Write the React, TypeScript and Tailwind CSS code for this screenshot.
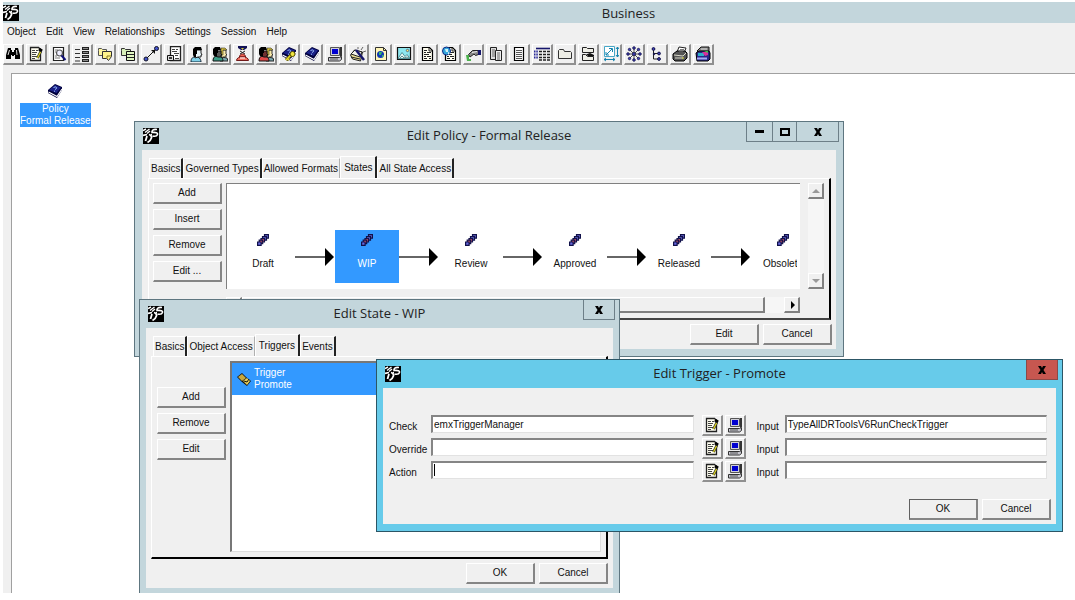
import React from "react";

type Children = { children?: React.ReactNode };

/* ---------- icons ---------- */

function Svg({ children, className = "w-4 h-4" }: Children & { className?: string }) {
  return (
    <svg viewBox="0 0 16 16" className={`${className} block shrink-0`} fill="none" aria-hidden="true">
      {children}
    </svg>
  );
}

const Logo = () => (
  <Svg>
    <path d="M0 0h16v16H0z" fill="#000" />
    <path d="M0 2.500 3 1M2 4.500 6.500 1M4 5.500 7 3" stroke="#fff" strokeWidth="1.400" />
    <path d="M14 1.500C10 1 8.500 2.500 9 4.500 13 4 15 5 14.500 6.500 14 8 12 8.500 9.500 8" stroke="#fff" strokeWidth="1.600" />
    <path d="M0 7.500 4 6.500M4 8 2.500 13M6 6.500C10 7.500 9 12 4.500 14.500" stroke="#fff" strokeWidth="1.800" />
    <path d="M9 6 7 8" stroke="#fff" />
  </Svg>
);

const Binoculars = () => (
  <Svg>
    <path d="M3 2h3v2h1v2h2V4h1V2h3l2 7v4h-5V9H9v1H7V9H6v4H1V9z" fill="#000" />
    <path d="M4.500 4 3 9M11.500 4 12 9" stroke="#ddd" />
  </Svg>
);

const NoteEdit = () => (
  <Svg>
    <path d="M2.500 1.500h8l2 2v11h-10z" fill="#fffef0" stroke="#222" strokeWidth="1.300" />
    <path d="M4 4.500h3M8 4.500h2M4 6.500h5M4 8.500h4M4 10.500h5M4 12.500h3" stroke="#444" strokeWidth="1.100" />
    <path d="m11 3 3 2" stroke="#000" strokeWidth="3" />
    <path d="M13 5 9.500 12" stroke="#222" strokeWidth="2.600" />
    <path d="m12.500 6-3 6" stroke="#d8d020" strokeWidth="1.400" />
  </Svg>
);

const NoteFind = () => (
  <Svg>
    <path d="M2.500 1.500h10v13h-10z" fill="#fff" stroke="#222" strokeWidth="1.200" />
    <path d="M4 4h3M4 6h1M4 12h5M4 10h2" stroke="#777" />
    <circle cx="8.500" cy="7" r="3" fill="#eef" stroke="#555" strokeWidth="1.200" />
    <path d="m10.500 9.500 4 4.500" stroke="#11117a" strokeWidth="2" />
  </Svg>
);

const ListBlocks = () => (
  <Svg>
    <path d="M1 3.500h5M1 7.500h5M1 11.500h5M1 15h5" stroke="#333" />
    <path d="M8 1h7v3H8zM8 5h7v3H8zM8 9h7v3H8zM8 13h7v3H8z" fill="#222" />
    <path d="M9 2.500h5M9 6.500h5M9 10.500h5M9 14.500h5" stroke="#888" />
  </Svg>
);

const YellowNotes = () => (
  <Svg>
    <path d="M1.500 4.500v-2h3l1 1h4v6h-8z" fill="#fff7a0" stroke="#555" />
    <path d="M5.500 5.500h9v5l-3 4-2-2h-4z" fill="#fff48a" stroke="#333" />
    <path d="M10 13v-3h4" stroke="#8a7a20" />
  </Svg>
);

const GreenNotes = () => (
  <Svg>
    <path d="M1.500 4.500v-2h3l1 1h5v6h-9z" fill="#d8f0b8" stroke="#333" />
    <path d="M6.500 5.500h8v9h-8z" fill="#dff6c0" stroke="#111" />
    <path d="M7 8.500h7M7 11.500h7" stroke="#222" />
  </Svg>
);

const Link = () => (
  <Svg>
    <path d="m3 13 9-9" stroke="#111" />
    <path d="M8 4h4v4z" fill="#111" />
    <circle cx="3" cy="13" r="2" fill="#4455cc" stroke="#112" />
    <circle cx="13.500" cy="2.500" r="2" fill="#4455cc" stroke="#112" />
  </Svg>
);

const Report = () => (
  <Svg>
    <path d="M4.500.5h10v14h-10z" fill="#fff" stroke="#222" strokeWidth="1.300" />
    <path d="M6 3.500h3M10 3.500h2M6 5.500h5M8 7.500h5M9 9.500h3M9 12.500h4" stroke="#444" />
    <path d="M1.500 9.500h6v5h-6z" fill="#ddd" stroke="#111" />
    <path d="M3 12h3" stroke="#111" strokeWidth="1.600" />
  </Svg>
);

const Person = () => (
  <Svg>
    <path d="M2 16c0-4 2-5 4-5h3c2 1 3 3 3 5z" fill="#7fd0e8" stroke="#123" />
    <path d="M6 4h6v3l1 2h-1v2H9l-3 1z" fill="#e8f4f8" stroke="#222" />
    <path d="M4 9V3l2-2h6l1 3H8v4H7v3H5z" fill="#000" />
  </Svg>
);

const People = ({ front = "#3b9c86", face = "#5a5a5a" }: { front?: string; face?: string }) => (
  <Svg>
    <path d="M8 15c1-4 2-4 7-3l1 3z" fill="#79a8b0" stroke="#222" />
    <path d="M9 4h5v4l1 1h-1v2h-3l-2 1z" fill="#f8e8a8" stroke="#333" />
    <path d="M9 2h4l2 2h-4v5H9z" fill="#d8c040" stroke="#332" strokeWidth=".6" />
    <path d="M1 15c0-3 1-5 4-5h3c2 1 3 3 3 5z" fill={front} stroke="#111" />
    <path d="M3 5h6v3l1 1H9v2H6l-3-1z" fill={face} stroke="#111" />
    <path d="M1 8V3l2-2h5l1 3H6v3H5v3H2z" fill="#000" />
  </Svg>
);

const Siren = () => (
  <Svg>
    <path d="M3 0h9v2L9 4H6L3 2z" fill="#111155" />
    <path d="M6 2h3L7.500 4z" fill="#d8d040" />
    <path d="M5 5 10 8M10 5 5 8" stroke="#222" />
    <path d="M4.500 11c0-4 6-4 6 0z" fill="#f06050" stroke="#701010" />
    <path d="M1.500 14.500c0-5 12-5 12 0z" fill="#f07060" stroke="#701818" />
    <path d="M5 12h5" stroke="#fff" />
  </Svg>
);

const Book = ({ withKey = false }: { withKey?: boolean }) => (
  <Svg>
    <path d="M1 7 8 1l7 3v3l-5 8-9-5z" fill="#00003c" />
    <path d="m2 7 6-5 6 2.500L9.500 10z" fill="#1a2188" />
    <path d="m1.500 9 8.500 4.500L15 6" stroke="#fff" strokeWidth="1.200" />
    <path d="M6.500 5c1-2 4-1 3 .5L8 6.500M7 8.200h1" stroke="#9fc4ff" />
    {withKey && (
      <>
        <path d="m10 9-5 5M6 12l2 2" stroke="#554d00" strokeWidth="3" />
        <path d="m10 9-5 5M6 12l2 2" stroke="#e8dc30" strokeWidth="1.600" />
        <circle cx="11.500" cy="8" r="2.500" fill="#f2e640" stroke="#554d00" />
      </>
    )}
  </Svg>
);

const Computer = () => (
  <Svg>
    <path d="M3.500 1.500h9v8h-9z" fill="#d0d0d8" stroke="#555" />
    <path d="M13 1h2v9l-2 1z" fill="#333" />
    <path d="M5 3h6v5H5z" fill="#0000d0" />
    <path d="M1.500 11.500h11l2-1v3l-2 1.500h-11z" fill="#c8c8d0" stroke="#333" />
    <path d="M3 13h8" stroke="#555" />
  </Svg>
);

const ToolStack = () => (
  <Svg>
    <path d="m.5 9 4-5 8 2-2 9-8-2z" fill="#e8dc90" stroke="#222" />
    <path d="m1 8 4-4 7 2-2 5zM1 11l9 2" fill="#f4f4e8" stroke="#222" />
    <path d="m6 4 8 10" stroke="#15156b" strokeWidth="2.500" />
    <path d="m11 4 2-3M13 6l3-1M8 3V1" stroke="#666" />
  </Svg>
);

const Globe = () => (
  <Svg>
    <path d="M2.500 1.500h8l3 3v10h-11z" fill="#fff6b8" stroke="#333" />
    <path d="M10.500 1.500v3h3" stroke="#333" />
    <circle cx="7.500" cy="8.500" r="3.500" fill="#1038b8" />
    <path d="M6 6h3l-1 3H6zM9 9h2l-2 3z" fill="#35b56a" />
  </Svg>
);

const Picture = () => (
  <Svg>
    <path d="M1.500 1.500h13v12h-13z" fill="#8de6ee" stroke="#111" strokeWidth="1.200" />
    <path d="m2 12.500 4-6 3 4 2-2 3 4z" fill="#e4f6f2" stroke="#3a7c84" strokeWidth=".8" />
    <path d="m4 12 2-2 2 2 3-1 2 1" stroke="#45777a" strokeWidth=".8" />
    <circle cx="11.500" cy="4.500" r="1.200" fill="#fff36a" stroke="#226" strokeWidth=".6" />
  </Svg>
);

const Doc = ({ globe = false }: { globe?: boolean }) => (
  <Svg>
    <path d="M3.500 1.500h7l3 3v10h-10z" fill="#fffef0" stroke="#000" strokeWidth="1.200" />
    <path d="M10 2v3h3M5 4.500h3M5 6.500h2M8 6.500h4M5 8.500h5M5 10.500h2M8 10.500h4M5 12.500h3M10 12.500h2" stroke="#222" />
    {globe && (
      <>
        <circle cx="4.500" cy="5" r="4" fill="#36a8dc" stroke="#102a88" />
        <path d="M3 3h3v3H4zM6 6l2 1-2 2z" fill="#d5f2f6" />
      </>
    )}
  </Svg>
);

const Hand = () => (
  <Svg>
    <path d="m3.500 8.500 4-4h6v4l-3 1L9 8l-4 3z" fill="#888" stroke="#222" />
    <path d="M13 4h3v5h-3z" fill="#15156b" />
    <path d="m7 6.500 5-1" stroke="#eee" />
    <path d="M1 9h3v4h2v2H2z" fill="#4cb24c" />
  </Svg>
);

const Pages = () => (
  <Svg>
    <path d="M2.500 1.500h6v12h-6z" fill="#ddd" stroke="#222" />
    <path d="M7.500 4.500h6v10h-6z" fill="#eee" stroke="#222" />
    <path d="M4 4h3M4 6h3M4 8h3M4 10h3M9 7h3M9 9h3M9 11h3M9 13h3" stroke="#666" />
  </Svg>
);

const Page = () => (
  <Svg>
    <path d="M3.500 1.500h9v13h-9z" fill="#fafafa" stroke="#000" strokeWidth="1.200" />
    <path d="M5 4.500h6M5 6.500h6M5 8.500h6M5 10.500h6M5 12.500h6" stroke="#555" />
  </Svg>
);

const Grid = () => (
  <Svg>
    <path d="M2 2.500h14" stroke="#15156b" strokeWidth="1.600" />
    <path d="M5 5.500h11M5 8.500h11M5 11.500h11M5 14h11" stroke="#222" strokeDasharray="3 1" strokeWidth="1.500" />
    <path d="M0 5.500h4M0 8.500h4M0 11.500h4" stroke="#2a2a98" strokeWidth="2" strokeDasharray="1.500 .8" />
  </Svg>
);

const Folder = () => (
  <Svg>
    <path d="M1.500 12.500v-8l1-1h4l1 2h6l1 1v6z" fill="#eeeee6" stroke="#333" />
  </Svg>
);

const Folders = () => (
  <Svg>
    <path d="M2.500 6.500v-5h4l1 1h6v4z" fill="#eeeee6" stroke="#222" />
    <path d="M2.500 14.500v-6h3l2 2h6v4z" fill="#eeeee6" stroke="#222" />
    <path d="M6 8.500 10 7l4 2v1H8z" fill="#111" />
  </Svg>
);

const Dimensions = () => (
  <Svg>
    <path d="M1.500.5h10v10h-10z" stroke="#48a8c8" fill="#fff" />
    <path d="m3 9 6-6M6 2.500h3.500V6M3 6v3h3M1 13.500h11M3 12l-2 1.500L3 15M10 12l2 1.500-2 1.500M14.500 1v10M13 3l1.500-2L16 3M13 9l1.500 2L16 9" stroke="#1684ae" />
  </Svg>
);

const Star = () => (
  <Svg>
    <path d="M8 3v10M3 8h10M4 4l8 8M12 4l-8 8" stroke="#222" strokeWidth=".8" />
    <g fill="#4040c0" stroke="#111144" strokeWidth=".8">
      <circle cx="8" cy="2" r="1.300" />
      <circle cx="8" cy="14" r="1.300" />
      <circle cx="2" cy="8" r="1.300" />
      <circle cx="14" cy="8" r="1.300" />
      <circle cx="3.500" cy="3.500" r="1.200" />
      <circle cx="12.500" cy="3.500" r="1.200" />
      <circle cx="3.500" cy="12.500" r="1.200" />
      <circle cx="12.500" cy="12.500" r="1.200" />
      <circle cx="8" cy="8" r="1.500" />
    </g>
  </Svg>
);

const Tree = () => (
  <Svg>
    <path d="M4.500 3v10h5M5 7.500h5" stroke="#222" />
    <g fill="#4040c0" stroke="#111144">
      <circle cx="4.500" cy="3" r="1.400" />
      <circle cx="10" cy="7.500" r="1.400" />
      <circle cx="10" cy="13" r="1.400" />
      <circle cx="5" cy="8" r=".8" />
    </g>
  </Svg>
);

const Printer = () => (
  <Svg>
    <path d="m5 6 2-5 7 1-2 5z" fill="#fff" stroke="#222" />
    <path d="m1 8 4-3h8l2 2v5l-3 3H3l-2-2z" fill="#555" stroke="#000" />
    <path d="m2 9 9 1 3-3M3 12h8" stroke="#d8d8c8" />
    <path d="M8 3.500h4M7 5h4" stroke="#777" />
    <path d="M10 12h2" stroke="#d8dc30" />
  </Svg>
);

const ColorPrinter = () => (
  <Svg>
    <path d="m2 5 4-4h8v5H3z" fill="#888" stroke="#111" />
    <path d="M6 3h6" stroke="#ddd" />
    <path d="m1 7 3-2h10l1 2v6l-2 2H2z" fill="#272788" stroke="#000" />
    <path d="M3 7h6v3H3z" fill="#2bb0c8" />
    <path d="M7 6h6v3l-3 1z" fill="#d8309a" />
    <path d="M9 5h4v2z" fill="#38c040" />
    <path d="M2 12.500h10" stroke="#a8a8f4" strokeWidth="2" />
  </Svg>
);

const StateChain = () => (
  <svg viewBox="0 0 12 12" className="h-3 w-3" fill="none" aria-hidden="true">
    <g strokeWidth="1.200" stroke="#11114a">
      <path d="M7.500.6h4v3.500h-4z" fill="#6666cc" />
      <path d="M5.500 2.600h4v3.500h-4z" fill="#6666cc" />
      <path d="M4 4.500h3.500V8H4z" fill="#d05a68" />
      <path d="M2.200 6.200h3.500v3.500H2.200z" fill="#d05a68" />
      <path d="M.6 8h3.500v3.400H.6z" fill="#6666dd" />
    </g>
  </svg>
);

const TriggerIcon = () => (
  <Svg>
    <path d="m1 6 5-4 4 4 5 4-4 5-5-4z" fill="#111" />
    <path d="m2 6 4-3 4 4-4 3z" fill="#c8a83c" />
    <path d="m7 10 4-3 3 3-3 4z" fill="#e8cf5a" />
    <path d="m8 10 3 1 2-3" stroke="#111" />
  </Svg>
);

/* ---------- shared controls ---------- */

function PushButton({ children, isDefault = false }: Children & { isDefault?: boolean }) {
  return (
    <button
      className={`h-[21px] w-[69px] shrink-0 border-r-2 border-b-2 border-r-[#858585] border-b-[#858585] text-center leading-none ${
        isDefault ? "border-t border-l border-t-[#606060] border-l-[#606060]" : "border-t border-l border-t-white border-l-white"
      }`}
    >
      {children}
    </button>
  );
}

function IconButton({ label, children }: Children & { label: string }) {
  return (
    <button
      aria-label={label}
      className="flex h-[21px] w-[21px] shrink-0 items-center justify-center border-t border-l border-r-2 border-b-2 border-t-white border-l-white border-r-[#909090] border-b-[#909090]"
    >
      {children}
    </button>
  );
}

function Tabs({ names, active }: { names: string[]; active: string }) {
  return (
    <div role="tablist" className="flex h-[22px] items-end pl-px">
      {names.map((name, i) => {
        const on = name === active;
        const beforeActive = names[i + 1] === active;
        return (
          <button
            key={name}
            role="tab"
            aria-selected={on}
            className={`border-t border-l border-t-white border-l-white leading-none whitespace-nowrap ${
              on ? "h-[22px] px-[3px]" : "h-5 px-px"
            } ${beforeActive ? "border-r border-r-[#b0b0b0]" : "border-r-2 border-r-[#222]"}`}
          >
            {name}
          </button>
        );
      })}
    </div>
  );
}

function Caption({ title, children }: Children & { title: string }) {
  return (
    <header className="relative flex h-7 items-center px-2 pb-px">
      <Logo />
      <h2 className="absolute inset-x-0 top-0 text-center font-['Open_Sans','Noto_Sans',sans-serif] text-[13px] leading-[26px] text-[#222]">
        {title}
      </h2>
      <div className="absolute top-0 right-1 flex">{children}</div>
    </header>
  );
}

const captionButton = "flex h-5 items-center justify-center border border-t-0";

function CloseButton({ className }: { className: string }) {
  return (
    <button aria-label="Close" className={`${captionButton} ${className}`}>
      <svg viewBox="0 0 8 8" className="h-2 w-2" aria-hidden="true">
        <path d="M0 0h3l1 2 1-2h3L5.500 4 8 8H5L4 6 3 8H0l2.500-4z" fill="#000" />
      </svg>
    </button>
  );
}

/* ---------- main window data ---------- */

const menus = ["Object", "Edit", "View", "Relationships", "Settings", "Session", "Help"];

const tools: [string, React.ReactNode][] = [
  ["Find", <Binoculars />],
  ["Edit", <NoteEdit />],
  ["Search in note", <NoteFind />],
  ["List", <ListBlocks />],
  ["Notes", <YellowNotes />],
  ["Copy", <GreenNotes />],
  ["Connect", <Link />],
  ["Report", <Report />],
  ["Person", <Person />],
  ["Group", <People />],
  ["Role", <Siren />],
  ["Association", <People front="#e04848" face="#703030" />],
  ["Policy access", <Book withKey />],
  ["Policy", <Book />],
  ["Program", <Computer />],
  ["Wizard", <ToolStack />],
  ["Page", <Globe />],
  ["Image", <Picture />],
  ["Form", <Doc />],
  ["Web form", <Doc globe />],
  ["Command", <Hand />],
  ["Menu", <Pages />],
  ["Channel", <Page />],
  ["Table", <Grid />],
  ["Folder", <Folder />],
  ["Folders", <Folders />],
  ["Dimension", <Dimensions />],
  ["Relationship", <Star />],
  ["Structure", <Tree />],
  ["Print", <Printer />],
  ["Print setup", <ColorPrinter />],
];

const states = ["Draft", "WIP", "Review", "Approved", "Released", "Obsolete"];

/* ---------- windows ---------- */

function ScrollArrow({ d, off = false }: { d: string; off?: boolean }) {
  return (
    <button
      aria-label="Scroll"
      className="flex h-4 w-4 shrink-0 items-center justify-center border-t border-l border-r-2 border-b-2 border-t-white border-l-white border-r-[#808080] border-b-[#808080] bg-[#f0f0f0]"
    >
      <svg viewBox="0 0 8 8" className="h-2 w-2" aria-hidden="true">
        <path d={d} fill={off ? "#999" : "#000"} />
      </svg>
    </button>
  );
}

function PolicyWindow() {
  return (
    <section className="absolute top-[47px] left-[122px] flex h-[236px] w-[710px] flex-col border border-[#5e7680] bg-[#c3d6dc] px-[7px] pb-[7px]">
      <div className="-mx-[7px]">
        <Caption title="Edit Policy - Formal Release">
          <button aria-label="Minimize" className={`${captionButton} w-[27px] border-[#6d7f88]`}>
            <span className="h-[3px] w-[9px] bg-black" />
          </button>
          <button aria-label="Maximize" className={`${captionButton} -ml-px w-[25px] border-[#6d7f88]`}>
            <span className="h-2 w-[10px] border-2 border-black" />
          </button>
          <CloseButton className="-ml-px w-[43px] border-[#6d7f88]" />
        </Caption>
      </div>
      <div className="flex min-h-0 flex-1 flex-col bg-[#f0f0f0] pt-[6px] pr-1 pb-1 pl-[6px]">
        <div className="pr-px">
          <Tabs names={["Basics", "Governed Types", "Allowed Formats", "States", "All State Access"]} active="States" />
        </div>
        <div className="mr-px flex min-h-0 flex-1 gap-1 border-t border-l border-r-2 border-b-2 border-t-white border-l-white border-r-black border-b-[#444] pt-1 pr-[5px] pb-[5px] pl-1">
          <div className="flex flex-col gap-[5px]">
            {["Add", "Insert", "Remove", "Edit ..."].map((b) => (
              <PushButton key={b}>{b}</PushButton>
            ))}
          </div>
          <div className="flex min-w-0 flex-1 flex-col gap-2">
            <div className="flex h-[106px] overflow-hidden border-t border-l border-[#808080] bg-white pt-[46px] pr-[3px] pl-1">
              <div className="flex min-w-0 flex-1 overflow-hidden">
                {states.map((s, i) => (
                  <React.Fragment key={s}>
                    <div
                      className={`flex h-[53px] w-16 shrink-0 flex-col items-center gap-3 pt-1 leading-3 ${
                        s === "WIP" ? "bg-[#3399ff] text-white" : ""
                      }`}
                    >
                      <StateChain />
                      <span>{s}</span>
                    </div>
                    {i < states.length - 1 && (
                      <svg viewBox="0 0 40 54" className="h-[54px] w-10 shrink-0" aria-hidden="true">
                        <path d="M0 27h31" stroke="#000" strokeWidth="1.200" />
                        <path d="m30 18 9 9-9 9z" fill="#000" />
                      </svg>
                    )}
                  </React.Fragment>
                ))}
              </div>
            </div>
            <div className="flex h-4 bg-[#f6f6f6]">
              <ScrollArrow d="M5 0v8L1 4z" />
              <div className="w-[523px] border-t border-l border-r-2 border-b-2 border-t-white border-l-white border-r-[#808080] border-b-[#808080] bg-[#f0f0f0]" />
              <div className="flex-1" />
              <ScrollArrow d="M3 0v8l4-4z" />
            </div>
          </div>
          <div className="ml-1 flex h-[106px] flex-col justify-between bg-[#f6f6f6]">
            <ScrollArrow d="m0 6 4-4 4 4z" off />
            <ScrollArrow d="m0 2 4 4 4-4z" off />
          </div>
        </div>
        <div className="flex justify-end gap-1 pt-1">
          <PushButton>Edit</PushButton>
          <PushButton>Cancel</PushButton>
        </div>
      </div>
    </section>
  );
}

function StateWindow() {
  return (
    <section className="absolute top-[225px] left-[127px] flex h-[297px] w-[481px] flex-col border border-[#5e7680] bg-[#c3d6dc] px-[6px] pb-[7px]">
      <div className="-mx-[6px]">
        <Caption title="Edit State - WIP">
          <CloseButton className="w-8 border-[#6d7f88]" />
        </Caption>
      </div>
      <div className="flex min-h-0 flex-1 flex-col bg-[#f0f0f0] px-[5px] pt-[6px] pb-1">
        <div className="pl-px">
          <Tabs names={["Basics", "Object Access", "Triggers", "Events"]} active="Triggers" />
        </div>
        <div className="flex min-h-0 flex-1 gap-1 border-t border-l border-r-2 border-b-2 border-t-white border-l-white border-r-black border-b-black pt-1 pr-[5px] pb-[5px] pl-[5px]">
          <div className="flex flex-col gap-[5px] pt-[26px]">
            {["Add", "Remove", "Edit"].map((b) => (
              <PushButton key={b}>{b}</PushButton>
            ))}
          </div>
          <div className="flex-1 border-t-2 border-r border-b border-l-2 border-t-[#777] border-r-[#ddd] border-b-[#ddd] border-l-[#777] bg-white">
            <div className="flex h-8 items-center gap-0.5 bg-[#3399ff] pl-1 leading-3 text-white">
              <TriggerIcon />
              <div>
                <div>Trigger</div>
                <div>Promote</div>
              </div>
            </div>
          </div>
        </div>
        <div className="flex justify-end gap-1 pt-1">
          <PushButton>OK</PushButton>
          <PushButton>Cancel</PushButton>
        </div>
      </div>
    </section>
  );
}

const field =
  "block h-[18px] w-full min-w-0 border-t-2 border-l-2 border-r border-b border-t-[#858585] border-l-[#858585] border-r-[#e2e2e2] border-b-[#e2e2e2] bg-white px-px outline-none";

function TriggerWindow() {
  const rows = [
    { name: "Check", value: "emxTriggerManager", input: "TypeAllDRToolsV6RunCheckTrigger" },
    { name: "Override", value: "", input: "" },
    { name: "Action", value: "", input: "" },
  ];
  return (
    <section className="absolute top-[285px] left-[364px] flex h-[173px] w-[687px] flex-col border border-[#2c5666] bg-[#67cbea] px-[6px] pb-[7px]">
      <div className="-mx-[6px]">
        <Caption title="Edit Trigger - Promote">
          <CloseButton className="w-8 border-[#8a4a48] bg-[#c75750]" />
        </Caption>
      </div>
      <div className="flex flex-1 flex-col justify-between bg-[#f0f0f0] pt-[27px] pr-[5px] pb-1 pl-[6px]">
        <div className="flex flex-col gap-0.5 pr-1">
          {rows.map((r) => (
            <div key={r.name} className="flex h-[21px]">
              <label htmlFor={r.name} className="w-[42px] shrink-0 pt-[6px] leading-3">
                {r.name}
              </label>
              <div className="relative flex-1">
                <input id={r.name} defaultValue={r.value} className={field} />
                {r.name === "Action" && <span className="absolute top-[3px] left-[3px] h-3 w-px bg-black" />}
              </div>
              <div className="flex gap-0.5 pl-2">
                <IconButton label={`Edit ${r.name}`}>
                  <NoteEdit />
                </IconButton>
                <IconButton label={`Choose program for ${r.name}`}>
                  <Computer />
                </IconButton>
              </div>
              <label htmlFor={`${r.name}-input`} className="w-[39px] shrink-0 pt-[6px] pl-[11px] leading-3">
                Input
              </label>
              <div className="flex-1">
                <input id={`${r.name}-input`} defaultValue={r.input} className={field} />
              </div>
            </div>
          ))}
        </div>
        <div className="flex justify-end gap-1">
          <PushButton isDefault>OK</PushButton>
          <PushButton>Cancel</PushButton>
        </div>
      </div>
    </section>
  );
}

export default function App() {
  return (
    <div className="h-screen bg-white pt-0.5 pb-[7px] pl-[3px] font-['Liberation_Sans',Arial,sans-serif] text-[10px] text-[#111]">
      <main className="flex h-full flex-col overflow-hidden bg-[#f0f0f0]">
        <header className="flex h-[21px] shrink-0 items-center bg-[#c3d6dc] pr-px">
          <Logo />
          <h1 className="flex-1 pl-[164px] text-center font-['Open_Sans','Noto_Sans',sans-serif] text-[13px] leading-5 text-[#222]">
            Business
          </h1>
        </header>
        <nav className="flex h-[17px] shrink-0 items-center gap-[10px] pl-1">
          {menus.map((m) => (
            <button key={m} className="leading-3">
              {m}
            </button>
          ))}
        </nav>
        <div role="toolbar" className="flex h-[33px] shrink-0 gap-0.5 pt-1">
          {tools.map(([label, icon]) => (
            <IconButton key={label} label={label}>
              {icon}
            </IconButton>
          ))}
        </div>
        <div className="relative ml-2 flex-1 overflow-hidden border-t border-l border-[#a0a0a0] bg-white">
          <div className="absolute top-[9px] left-2 flex flex-col items-center gap-1">
            <Book />
            <div className="bg-[#3399ff] text-center leading-3 whitespace-nowrap text-white">
              Policy
              <br />
              Formal Release
            </div>
          </div>
          <PolicyWindow />
          <StateWindow />
          <TriggerWindow />
        </div>
      </main>
    </div>
  );
}
